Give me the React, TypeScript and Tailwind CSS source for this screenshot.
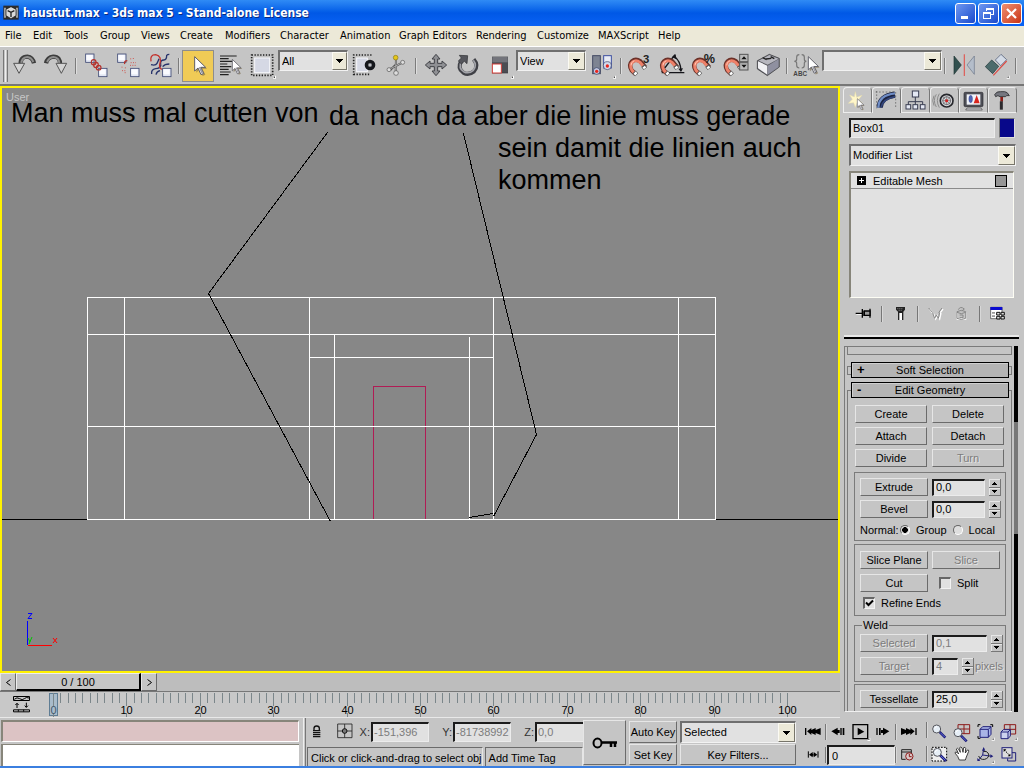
import React from "react";

const UI = "font-['Liberation_Sans',Arial,sans-serif]";
const RAISED = "border border-t-[#e6e6e6] border-l-[#e6e6e6] border-b-[#6b6b6b] border-r-[#6b6b6b]";
const SUNKEN = "border-t-2 border-l-2 border-b border-r border-t-[#1c1c1c] border-l-[#1c1c1c] border-b-[#ececec] border-r-[#ececec] bg-[#e1e1e1]";

type Kids = { children?: React.ReactNode };

/* Icon drawn on a grid three times finer than its size on screen. */
function Icon({ x, y, w = 32, h = 32, children }: { x: number; y: number; w?: number; h?: number } & Kids) {
  return (
    <svg width={w} height={h} viewBox={`${x} ${y} ${w * 3} ${h * 3}`} fill="none" className="block shrink-0" aria-hidden="true">
      {children}
    </svg>
  );
}

function Tool({ label, x, children, active = false }: { label: string; x: number; active?: boolean } & Kids) {
  return (
    <button
      aria-label={label}
      className={
        active
          ? "h-8 w-8 shrink-0 bg-[#f0cb56] outline outline-1 -outline-offset-1 outline-[#8d8d8d]"
          : "h-8 w-8 shrink-0"
      }
    >
      <Icon x={x} y={150}>
        {children}
      </Icon>
    </button>
  );
}

function Sep({ wide = false }: { wide?: boolean }) {
  return (
    <span className={wide ? "flex h-8 w-2 shrink-0 items-center justify-center" : "flex h-8 w-1.5 shrink-0 items-center justify-center"}>
      <span className="h-4 w-0.5 border-l border-[#7b7b7b] bg-[#dedede]" />
    </span>
  );
}

function Combo({ label, value, box, arrow }: { label: string; value: string; box: string; arrow: string }) {
  return (
    <span className={"relative block border-t-2 border-l-2 border-b border-r border-t-[#6f6f6f] border-l-[#6f6f6f] border-b-[#f2f2f2] border-r-[#f2f2f2] bg-[#e1e1e1] " + box}>
      <select aria-label={label} defaultValue={value} className="block h-full w-full appearance-none bg-transparent pr-4 pb-px pl-0.5 text-[11px] leading-3 outline-none">
        <option>{value}</option>
      </select>
      <span className={"pointer-events-none absolute top-0 right-0 bottom-0 flex items-center justify-center border border-t-[#fbfaf3] border-l-[#fbfaf3] border-r-[#77756a] border-b-[#77756a] bg-[#ece9d8] " + arrow}>
        <svg width="7" height="4" viewBox="0 0 7 4" shapeRendering="crispEdges">
          <path d="M0 0H7V1H0ZM1 1H6V2H1ZM2 2H5V3H2ZM3 3H4V4H3Z" fill="#000" />
        </svg>
      </span>
    </span>
  );
}

function Magnet({ dx = 0 }: { dx?: number }) {
  return (
    <g transform={`translate(${dx} 0)`}>
      <path d="M884 223 L872 211 Q862 195 873 184 Q884 174 898 184 L913 202" stroke="#6b3129" strokeWidth="13" />
      <path d="M882 221 L873 211 Q864 195 875 186 Q885 178 897 187 L911 203" stroke="#ee8169" strokeWidth="9" />
      <path d="M870 196 Q870 186 880 182" stroke="#ffc7b4" strokeWidth="3" />
      <path d="M879 216 l8 8 M906 197 l7 9" stroke="#555" strokeWidth="13" />
      <path d="M881 218 l5 5 M908 200 l4 5" stroke="#fff" strokeWidth="9" />
    </g>
  );
}

function Cube({ x, y, s = 25 }: { x: number; y: number; s?: number }) {
  return (
    <g>
      <rect x={x} y={y} width={s} height={s} fill="#e3e7f4" stroke="#3e4873" strokeWidth="2.5" />
      <path d={`M${x + 2} ${y + 3}h${s - 6}v${s - 10}h-${s - 6}z`} fill="#fafbff" />
    </g>
  );
}

function Cursor({ x, y, s = 1 }: { x: number; y: number; s?: number }) {
  return (
    <g transform={`translate(${x} ${y}) scale(${s})`}>
      <path d="M5 5V48L15 38L24 58L32 54L23 36H37Z" fill="#7b6a4a" opacity=".6" />
      <path d="M0 0V43L10 34L19 54L27 50L18 32H33Z" fill="#fff" stroke="#5d5d66" strokeWidth="3" />
      <path d="M12 32l9 19 4-2-8-18z" fill="#9a9aa2" />
    </g>
  );
}

const Flyout = ({ x, y }: { x: number; y: number }) => (
  <>
    <path d={`M${x} ${y}v10h-10z`} fill="#fff" />
    <path d={`M${x - 3} ${y + 3}v4h-4z`} fill="#000" />
  </>
);

const menus = ["File", "Edit", "Tools", "Group", "Views", "Create", "Modifiers", "Character", "Animation", "Graph Editors", "Rendering", "Customize", "MAXScript", "Help"];

function TitleBar() {
  const btn = "flex h-[21px] w-[21px] items-center justify-center rounded-[3px] border border-white";
  return (
    <header className="flex h-[26px] shrink-0 items-center bg-linear-to-b from-[#2f8bf5] via-[#0058e6] to-[#0a62f5] pr-0.5 pl-[3px]">
      <svg width="16" height="16" viewBox="0 0 48 48" aria-hidden="true">
        <rect x="1" y="2" width="46" height="42" fill="#2b2b2b" />
        <path d="M6 8v30M42 8v30" stroke="#d8d8d8" strokeWidth="4" />
        <path d="M24 5l15 8v19l-15 9-15-9V13z" fill="#dadada" stroke="#111" strokeWidth="2" />
        <path d="M14 17l10 5 10-5M24 22v14" stroke="#222" strokeWidth="4" fill="none" />
      </svg>
      <h1 className="flex-1 pl-1 font-['DejaVu_Sans_Condensed','DejaVu_Sans',sans-serif] text-[12px] leading-4 font-bold text-white [text-shadow:1px_1px_0_#0a2a80]">
        haustut.max - 3ds max 5 - Stand-alone License
      </h1>
      <div className="flex gap-0.5">
        <button aria-label="Minimize" className={btn + " bg-linear-to-br from-[#6f97f0] to-[#1a48cc]"}>
          <svg width="15" height="15" viewBox="0 0 15 15"><path d="M3 10h7v3H3z" fill="#fff" /></svg>
        </button>
        <button aria-label="Restore" className={btn + " bg-linear-to-br from-[#6f97f0] to-[#1a48cc]"}>
          <svg width="15" height="15" viewBox="0 0 15 15" fill="none" stroke="#fff" shapeRendering="crispEdges">
            <path d="M5.5 5V2.5h7v6H10M5 3.5h8M2.5 6.500h7v6h-7zM2 7.500h8" />
          </svg>
        </button>
        <button aria-label="Close" className={btn + " bg-linear-to-br from-[#ee8e70] to-[#c9300c]"}>
          <svg width="15" height="15" viewBox="0 0 15 15"><path d="M3 3l9 9M12 3l-9 9" stroke="#fff" strokeWidth="2.200" /></svg>
        </button>
      </div>
    </header>
  );
}

function Toolbar() {
  return (
    <div role="toolbar" aria-label="Main Toolbar" className="flex h-10 shrink-0 items-start overflow-hidden border-t border-b-2 border-t-white border-b-[#777] bg-[#c5c5c5] pt-[3px]">
      <span className="flex h-8 w-2 shrink-0 gap-px pl-[3px]">
        <span className="w-px bg-[#777]" />
        <span className="w-px bg-[#eee]" />
        <span className="w-px bg-[#777]" />
      </span>
      <Tool label="Undo" x={24}>
        <path d="M62 195Q60 170 82 170Q98 172 102 190" stroke="#3d3d3d" strokeWidth="13" />
        <path d="M64 192Q64 172 82 171Q94 172 100 186" stroke="#8f8f8f" strokeWidth="6" />
        <path d="M41 190H74L57 220Z" fill="#d3d3d3" stroke="#555" strokeWidth="3" />
      </Tool>
      <Tool label="Redo" x={120}>
        <path d="M180 195Q182 170 160 170Q142 172 138 190" stroke="#3d3d3d" strokeWidth="13" />
        <path d="M178 192Q178 172 160 171Q148 172 141 186" stroke="#8f8f8f" strokeWidth="6" />
        <path d="M168 190H200L184 220Z" fill="#d3d3d3" stroke="#555" strokeWidth="3" />
      </Tool>
      <Sep wide />
      <Tool label="Select and Link" x={240}>
        <Cube x={257} y={162} />
        <Cube x={296} y={205} />
        <g stroke="#b5312c" strokeWidth="3.500">
          <ellipse cx="281" cy="187" rx="7" ry="8" /><ellipse cx="288" cy="195" rx="7" ry="8" /><ellipse cx="296" cy="203" rx="7" ry="7" />
        </g>
      </Tool>
      <Tool label="Unlink Selection" x={336}>
        <Cube x={353} y={162} />
        <Cube x={392} y={205} />
        <path d="M374 192q-2-10 8-10" stroke="#b5312c" strokeWidth="4" />
        <path d="M392 175v4m8-5v4m-8 10h16m-18 8h20M366 200v4m10-2v4m-10 6h14m-6 6h4" stroke="#cf5b53" strokeWidth="3" strokeDasharray="3 4" />
      </Tool>
      <Tool label="Bind to Space Warp" x={432}>
        <g stroke="#27336b" strokeWidth="4">
          <path d="M453 194q14 4 18-4t6-14M455 222q-2-14 12-16 14 0 16-12M482 194q-2-14 10-14 8 0 8-14 2-3 8-3M468 224q2-10 12-12M488 200q6-8 20-8" />
        </g>
        <path d="M453 184q-4-20 14-20 20 4 12 30-2 12 8 14" stroke="#c3302b" strokeWidth="4" />
        <Cube x={488} y={205} />
      </Tool>
      <Sep />
      <Tool label="Select Object" x={546} active>
        <Cursor x={584} y={170} />
      </Tool>
      <Tool label="Select by Name" x={642}>
        <path d="M660 168h50M660 176h26M660 184h38M660 192h22M660 200h34M660 208h26M660 216h32M660 224h26" stroke="#222" strokeWidth="3.500" />
        <Cursor x={697} y={178} s={0.8} />
      </Tool>
      <Tool label="Rectangular Selection Region" x={738}>
        <rect x="755" y="165" width="63" height="61" stroke="#222" strokeWidth="5" strokeDasharray="4 4.500" />
        <rect x="764" y="174" width="45" height="44" fill="#d5d8e4" stroke="#f7f7fb" strokeWidth="3" />
        <Flyout x={828} y={226} />
      </Tool>
      <Combo label="Selection Filter" value="All" box="h-[21px] w-[70px] shrink-0" arrow="w-[15px]" />
      <Tool label="Window/Crossing" x={24}>
        <path d="M41 226V165H96M41 223H92" stroke="#222" strokeWidth="5" strokeDasharray="4 4.500" />
        <rect x="50" y="174" width="32" height="41" fill="#d5d8e4" stroke="#f7f7fb" strokeWidth="3" />
        <circle cx="90" cy="195" r="16" fill="#15171c" />
        <circle cx="90" cy="195" r="6" fill="#8b8d94" /><circle cx="90" cy="195" r="2.500" fill="#fff" />
      </Tool>
      <Tool label="Select and Manipulate" x={120}>
        <path d="M168 177L167 218M147 209L188 187M167 194l-16 16" stroke="#555" strokeWidth="6" />
        <path d="M168 177L167 218M150 207L188 187" stroke="#bbb" strokeWidth="2.500" />
        <circle cx="167" cy="173" r="7" fill="#e6c718" stroke="#8a7715" strokeWidth="2" />
        <circle cx="147" cy="209" r="6" fill="#ddd" stroke="#555" strokeWidth="2" />
        <circle cx="188" cy="187" r="6" fill="#ddd" stroke="#555" strokeWidth="2" />
        <circle cx="168" cy="219" r="7" fill="#ddd" stroke="#555" strokeWidth="2" />
      </Tool>
      <Sep wide />
      <Tool label="Select and Move" x={240}>
        <path d="M288 163l12 14h-7v13h13v-7l14 12-14 12v-7h-13v13h7l-12 14-12-14h7v-13h-13v7l-14-12 14-12v7h13v-13h-7z" fill="#8f9094" stroke="#414247" strokeWidth="3" />
      </Tool>
      <Tool label="Select and Rotate" x={336}>
        <path d="M364 182Q351 205 370 218Q386 227 402 214Q417 196 401 178" stroke="#3f4046" strokeWidth="12" />
        <path d="M364 184Q354 204 371 215Q386 223 400 211Q412 196 400 181" stroke="#a3a4aa" strokeWidth="5" />
        <path d="M358 166l25 1-2 24-8-7-9 8-9-9 9-9z" fill="#55565c" stroke="#2c2d31" strokeWidth="2" />
      </Tool>
      <Tool label="Select and Scale" x={432}>
        <rect x="457" y="171" width="46" height="48" fill="#4b4c52" stroke="#37383c" strokeWidth="2" />
        <path d="M457 171h46v16h-46z" fill="#73747b" />
        <rect x="457" y="192" width="27" height="27" fill="#fff" stroke="#d6413a" strokeWidth="3" />
        <Flyout x={522} y={226} />
      </Tool>
      <Combo label="Reference Coordinate System" value="View" box="h-[21px] w-[70px] shrink-0" arrow="w-[17px]" />
      <Tool label="Use Pivot Point Center" x={738}>
        <rect x="758" y="167" width="23" height="54" fill="#7e8492" stroke="#434a63" strokeWidth="3" />
        <rect x="791" y="167" width="23" height="37" fill="#e8ebf5" stroke="#3c4ea0" strokeWidth="3" />
        <circle cx="770" cy="213" r="10" fill="#c3cbe3" stroke="#333c60" strokeWidth="2" />
        <circle cx="802" cy="197" r="12" fill="#d3daee" stroke="#333c60" strokeWidth="2" />
        <circle cx="770" cy="214" r="5" fill="#e8261d" /><circle cx="802" cy="198" r="5" fill="#e8261d" />
        <Flyout x={828} y={226} />
      </Tool>
      <Sep />
      <Tool label="Snaps Toggle" x={849}>
        <Magnet />
        <text x="906" y="189" fontSize="34" fontWeight="bold" fontFamily="Liberation Sans" fill="#222">3</text>
      </Tool>
      <Tool label="Angle Snap" x={945}>
        <path d="M962 218h68M962 216l40-52M1000 170q18 12 20 42" stroke="#15151a" strokeWidth="4" />
        <path d="M1012 206l8 10 6-11zM992 172l12-9 2 14z" fill="#15151a" />
        <Magnet dx={96} />
      </Tool>
      <Tool label="Percent Snap" x={16}>
        <Magnet dx={-833} />
        <text x="63" y="190" fontSize="38" fontWeight="bold" fontFamily="Liberation Sans" fill="#222">%</text>
      </Tool>
      <Tool label="Spinner Snap" x={112}>
        <Magnet dx={-738} />
        <rect x="171" y="163" width="25" height="22" fill="#bbb" stroke="#555" strokeWidth="3" />
        <rect x="171" y="188" width="25" height="22" fill="#bbb" stroke="#555" strokeWidth="3" />
        <path d="M176 178l8-9 8 9zM176 194l8 9 8-9z" fill="#111" />
      </Tool>
      <Tool label="Keyboard Shortcut Override" x={210}>
        <path d="M226 182l36-19 30 12v26l-36 26-30-20z" fill="#55565c" stroke="#3b3b40" strokeWidth="2" />
        <path d="M228 184l28 13v27l-28-19z" fill="#f1f1f4" />
        <path d="M257 197l33-20v24l-33 23z" fill="#8f90a0" />
        <path d="M230 182l32-17 28 11-33 18z" fill="#b7b7bf" />
        <path d="M242 173l12 6M252 177l16-2M266 170l11 6" stroke="#222" strokeWidth="4" />
      </Tool>
      <Sep />
      <Tool label="Named Selection Sets" x={326}>
        <path d="M354 164q-8 0-8 8v6q0 6-7 6 7 0 7 6v6q0 8 8 8M361 164q8 0 8 8v6q0 6 6 6-6 0-6 6v6q0 8-8 8" stroke="#777" strokeWidth="3.500" />
        <text x="336" y="227" fontSize="19" fontWeight="bold" fontFamily="Liberation Sans" fill="#444">ABC</text>
        <Cursor x={381} y={170} s={0.92} />
      </Tool>
      <Combo label="Named Selection" value="" box="h-[21px] w-[120px] shrink-0" arrow="w-[17px]" />
      <Sep />
      <Tool label="Mirror" x={798}>
        <path d="M816 168l22 27-22 28z" fill="#31504f" stroke="#203534" strokeWidth="2" />
        <path d="M877 168l-22 27 22 28z" fill="#b4bdca" stroke="#6a7486" strokeWidth="2" />
        <path d="M847 163v65" stroke="#e05a55" strokeWidth="3.500" />
      </Tool>
      <Tool label="Align" x={894}>
        <path d="M910 200l19-20 21 19-18 22z" fill="#4c6b6c" stroke="#2f4546" strokeWidth="2.500" />
        <path d="M940 180l17-17 17 16-18 18z" fill="#d4dbe6" stroke="#5d6780" strokeWidth="2.500" />
        <path d="M934 226l40-43" stroke="#dd4a44" strokeWidth="3.500" />
        <Flyout x={983} y={226} />
      </Tool>
      <Sep wide />
    </div>
  );
}

function Viewport() {
  const note = "absolute text-[27px] leading-8 whitespace-nowrap text-black";
  return (
    <section aria-label="User viewport" className="relative min-h-0 flex-1 overflow-hidden border-2 border-[#fff200] bg-[#878787]">
      <svg className="absolute inset-0 h-full w-full" shapeRendering="crispEdges" fill="none">
        <g transform="translate(-2 -88)">
          <path d="M0 519.500H87M716 519.500H3000" stroke="#000" />
          <path d="M373.500 519V386.500H425.500V519" stroke="#b01c55" />
          <path d="M87.500 297.500H715.500V519.500H87.500ZM87 334.500H716M87 426.500H716M124.500 297V519M678.500 297V519M309.500 297V519M493.500 297V519M309 357.500H494M334.500 334V519M469.500 337V519" stroke="#fff" />
          <path d="M327.500 132.500L208.500 293.500L330.500 521.500M463.500 133.500L536.500 434.500L493.500 516.500M493.500 513.500L469.500 517.500" stroke="#000" />
          <path d="M27.500 621V645" stroke="#00f" />
          <path d="M28 645.500H52" stroke="#f00" />
          <g shapeRendering="auto">
            <path d="M28 613.500h4l-4 5h4" stroke="#00f" />
            <path d="M53 638l4 5M57 638l-4 5" stroke="#f00" />
            <path d="M28 638l2 4M32 637l-3 7" stroke="#00c800" />
          </g>
        </g>
      </svg>
      <span className="absolute top-[3px] left-1 text-[11px] leading-3 text-[#c6c6c6]">User</span>
      <p className={note + " top-[9px] left-[9px]"}>Man muss mal cutten von</p>
      <p className={note + " top-3 left-[327px]"}>da</p>
      <p className={note + " top-3 left-[368px]"}>nach da aber die linie muss gerade</p>
      <p className={note + " top-11 left-[496px]"}>
        sein damit die linien auch
        <br />
        kommen
      </p>
    </section>
  );
}

const frames = Array.from({ length: 101 }, (_, i) => i);

function TimeBar() {
  const at = (f: number) => Math.round(4 + f * 7.34) + 0.5;
  return (
    <>
      <div className="flex h-[18px] shrink-0 bg-[#bdbdbd]">
        <button aria-label="Previous frame" className={"flex w-4 items-center justify-center bg-[#c5c5c5] " + RAISED}>
          <svg width="5" height="7" viewBox="0 0 5 7" fill="none" stroke="#000"><path d="M4.500 .5l-4 3 4 3" /></svg>
        </button>
        <button className="w-[125px] border border-t-[#eee] border-r-2 border-b-2 border-l-[#eee] border-r-black border-b-black bg-[#c5c5c5] text-[11px] leading-3">
          0 / 100
        </button>
        <button aria-label="Next frame" className={"flex w-4 items-center justify-center bg-[#c5c5c5] " + RAISED}>
          <svg width="5" height="7" viewBox="0 0 5 7" fill="none" stroke="#000"><path d="M.5 .5l4 3-4 3" /></svg>
        </button>
      </div>
      <div className="flex h-[27px] shrink-0 border-t border-b border-t-[#777] border-b-[#e8e8e8] bg-[#c8c8c8]">
        <button aria-label="Open Mini Curve Editor" className="w-[49px] shrink-0 pl-[13px]">
          <svg width="17" height="17" viewBox="0 0 51 51" fill="none" stroke="#000" strokeWidth="3">
            <path d="M1.500 1.500h48v12h-48zM4 10q8-8 16-2t14 0 14-2M1.500 41.500h48v6h-48zM12 36V22M7 27l5-5 5 5M40 20v14M35 29l5 5 5-5M16 41v6M32 41v6" />
          </svg>
        </button>
        <svg className="h-full min-w-0 flex-1" fill="none" aria-label="Track bar">
          <g shapeRendering="crispEdges" stroke="#7b868a">
            <rect x="0.500" y="1.500" width="8" height="22" fill="#a9bccb" stroke="#5f7d94" />
            {frames.map((f) => (
              <path key={f} d={f % 10 ? `M${at(f)} 1V11` : `M${at(f)} 1V14M${at(f)} 21V25`} />
            ))}
          </g>
          {frames.filter((f) => f % 10 === 0).map((f) => (
            <text key={f} x={at(f)} y="22" textAnchor="middle" fontSize="11" fill={f ? "#000" : "#41586c"}>
              {f}
            </text>
          ))}
        </svg>
      </div>
    </>
  );
}

function Push({ children, disabled = false, size = "h-[18px]" }: { disabled?: boolean; size?: string } & Kids) {
  return (
    <button
      disabled={disabled}
      className={
        RAISED + " " + size + " shrink-0 text-center text-[11px] leading-3 whitespace-nowrap " +
        (disabled ? "text-[#7c7c7c] [text-shadow:1px_1px_0_#e4e4e4]" : "text-black")
      }
    >
      {children}
    </button>
  );
}

function Spinner({ label, value, box, disabled = false }: { label: string; value: string; box: string; disabled?: boolean }) {
  return (
    <span className="flex gap-1">
      <input
        aria-label={label}
        defaultValue={value}
        disabled={disabled}
        className={SUNKEN + " h-[17px] pb-0.5 pl-0.5 text-[11px] leading-3 outline-none " + box + (disabled ? " text-[#7c7c7c]" : " text-black")}
      />
      <button aria-label={label + " stepper"} disabled={disabled} className="h-[17px] w-3">
        <svg width="12" height="17" viewBox="0 0 12 17" shapeRendering="crispEdges">
          <path d="M0 .5H12M.5 0V17M0 9.500H12" stroke="#e6e6e6" />
          <path d="M0 8.500H12M11.500 0V17M0 16.500H12" stroke="#777" />
          <path d="M5 3h1v1h1v1h1v1H3V5h1V4h1zM3 11h5v1H7v1H6v1H5v-1H4v-1H3z" fill="#000" />
        </svg>
      </button>
    </span>
  );
}

function Radio({ label, on = false }: { label: string; on?: boolean }) {
  return (
    <label className="flex items-center gap-1.5">
      <input
        type="radio"
        name="normal"
        defaultChecked={on}
        className="h-2.5 w-2.5 appearance-none rounded-full border border-t-[#666] border-r-white border-b-white border-l-[#666] bg-[#dedede] checked:bg-[radial-gradient(circle,#000_45%,#dedede_55%)]"
      />
      {label}
    </label>
  );
}

function Check({ label, on = false }: { label: string; on?: boolean }) {
  return (
    <label className="flex items-center gap-1.5">
      <span className="relative h-3 w-3">
        <input type="checkbox" defaultChecked={on} className="block h-3 w-3 appearance-none border-t-2 border-l-2 border-r border-b border-t-[#666] border-r-[#f2f2f2] border-b-[#f2f2f2] border-l-[#666] bg-[#e1e1e1]" />
        {on && (
          <svg className="pointer-events-none absolute inset-0" width="12" height="12" viewBox="0 0 12 12" fill="none" stroke="#000" strokeWidth="2">
            <path d="M3 5.500l2.500 2.500L10 3.500" />
          </svg>
        )}
      </span>
      {label}
    </label>
  );
}

function Tab({ label, x, active = false, children }: { label: string; x: number; active?: boolean } & Kids) {
  return (
    <button
      role="tab"
      aria-label={label}
      aria-selected={active}
      className={
        "flex h-[26px] w-[29px] shrink-0 justify-center rounded-t-sm border-t border-r border-l border-t-[#ededed] border-r-[#777] border-l-[#ededed] " +
        (active ? "" : "border-b border-b-[#ededed]")
      }
    >
      <Icon x={x} y={9} w={27} h={25}>{children}</Icon>
    </button>
  );
}

function SmallSep() {
  return <span className="h-4 w-0.5 border-l border-[#777] bg-[#d8d8d8]" />;
}

function CommandPanel() {
  const edge = "border-[#7b7b7b]";
  return (
    <aside className="flex w-[184px] shrink-0 flex-col overflow-hidden pt-px pl-[3px]">
      <div role="tablist" className="flex shrink-0">
        <Tab label="Create" x={12}>
          <path d="M46 20l4 17 16-6-11 13 12 10-16-1-5 14-5-14-16 2 12-12-8-13 14 6z" fill="#fff6c9" stroke="#e6dca8" strokeWidth="1.500" />
          <Cursor x={52} y={41} s={0.6} />
        </Tab>
        <Tab label="Modify" x={96} active>
          <path d="M116 68Q118 34 162 29" stroke="#1c2340" strokeWidth="19" />
          <path d="M112 68Q113 30 162 25" stroke="#6f8dc6" strokeWidth="7" />
          <path d="M120 68Q124 42 162 35" stroke="#33467c" strokeWidth="5" />
          <path d="M107 18v52M104 21h60v50" stroke="#555" strokeWidth="2" strokeDasharray="5 5" />
        </Tab>
        <Tab label="Hierarchy" x={184}>
          <path d="M224 36v14M203 62V50h43v12M224 50v12" stroke="#3a3e52" strokeWidth="3" />
          <g fill="#e4e8f3" stroke="#3a3e52" strokeWidth="3">
            <rect x="215" y="18" width="19" height="18" /><rect x="196" y="59" width="14" height="13" /><rect x="217" y="59" width="14" height="13" /><rect x="239" y="59" width="14" height="13" />
          </g>
        </Tab>
        <Tab label="Motion" x={274}>
          <path d="M290 28q-12 18 0 38M299 26q-12 20 0 42M283 32q-8 14 0 30" stroke="#8d8d8d" strokeWidth="3" />
          <circle cx="321" cy="47" r="19" fill="#d9d9dc" stroke="#26272c" strokeWidth="5" />
          <circle cx="321" cy="47" r="12" stroke="#3b3c42" strokeWidth="2" />
          <path d="M321 35v24M309 47h24M312 38l18 18M330 38l-18 18" stroke="#444" strokeWidth="1.500" />
          <circle cx="321" cy="47" r="4.500" fill="#d22020" />
        </Tab>
        <Tab label="Display" x={359}>
          <rect x="371" y="22" width="57" height="43" rx="4" fill="#4d4e56" stroke="#2c2c30" strokeWidth="2" />
          <rect x="379" y="28" width="41" height="31" fill="#f0f3fa" />
          <ellipse cx="391" cy="42" rx="5.500" ry="11" fill="#5064b4" stroke="#26367f" />
          <path d="M409 30l9 25h-18z" fill="#d8241e" />
          <path d="M380 69h42l4 6h-50z" fill="#d2d2d8" stroke="#444" strokeWidth="2" />
        </Tab>
        <Tab label="Utilities" x={446}>
          <path d="M463 29q6-11 18-9h12q8 0 14 12-9-2-12 3h-16q-6-6-13 0z" fill="#75777f" stroke="#2a2b2e" strokeWidth="2.500" />
          <path d="M484 36v14" stroke="#8c1f18" strokeWidth="8" />
          <path d="M483 49v25" stroke="#2c2a2d" strokeWidth="9" />
        </Tab>
      </div>

      <div className="mt-[5px] flex h-5 shrink-0 gap-1 pl-1.5">
        <input aria-label="Object name" defaultValue="Box01" className={SUNKEN + " w-[146px] pb-px pl-0.5 text-[11px] leading-3 outline-none"} />
        <button aria-label="Object color" className="h-5 w-4 border border-t-[#777] border-l-[#777] border-[#ddd] bg-[#08088a]" />
      </div>
      <Combo label="Modifier List" value="Modifier List" box="ml-1.5 mt-1.5 h-[22px] w-[167px] shrink-0" arrow="w-[17px]" />
      <div className="mt-[5px] ml-1.5 h-[127px] w-[165px] shrink-0 border-t-2 border-l-2 border-r border-b border-t-[#87857a] border-r-[#fdfdf4] border-b-[#fdfdf4] border-l-[#87857a] bg-[#e1e1e1]">
        <div className="flex h-4 items-center border-b border-[#8a8a8a] pr-1.5 pl-1.5 text-[11px] leading-3">
          <svg width="9" height="9" viewBox="0 0 9 9" shapeRendering="crispEdges"><path d="M0 0h9v9H0z" /><path d="M2 4h5v1H2zM4 2h1v5H4z" fill="#fff" /></svg>
          <span className="flex-1 pl-[7px]">Editable Mesh</span>
          <span className="h-3 w-3 border border-black bg-[#959595]" />
        </div>
      </div>

      <div className="flex h-8 w-full shrink-0 items-center gap-2 pl-3">
        <button aria-label="Pin Stack">
          <Icon x={46} y={46} w={18} h={18}>
            <path d="M50 74h19" stroke="#fff" strokeWidth="3" />
            <path d="M48 71h20M68 58v26M73 63v16M91 57v27" stroke="#000" strokeWidth="4" />
            <path d="M74 64h17v13H74z" fill="#999" stroke="#000" strokeWidth="4" />
          </Icon>
        </button>
        <SmallSep />
        <button aria-label="Show end result">
          <Icon x={152} y={46} w={18} h={18}>
            <path d="M167 52h27v8l-5 6v25h-16V66l-6-6z" fill="#222" /><path d="M177 70h8v21h-8z" fill="#fff" /><path d="M171 57h18M175 62h12" stroke="#888" strokeWidth="3" strokeDasharray="3 3" />
          </Icon>
        </button>
        <SmallSep />
        <button aria-label="Make unique" disabled>
          <Icon x={262} y={46} w={18} h={18}>
            <path d="M270 58l10 14M310 58l-10 14M282 72l6 16 6-10 6 10 4-18" stroke="#fff" strokeWidth="4" />
            <path d="M267 55l12 14M307 55l-10 14M279 70l6 16 5-10 6 10 4-18" stroke="#888" strokeWidth="3" />
          </Icon>
        </button>
        <button aria-label="Remove modifier" disabled>
          <Icon x={334} y={46} w={18} h={18}>
            <path d="M347 68v20h25V68" stroke="#fff" strokeWidth="4" />
            <path d="M346 66q13-8 26 0v20q-13 7-26 0zM346 68q13 8 26 0M350 60q6-12 18-2l-8 6M354 76h10v8h-10" stroke="#888" strokeWidth="3" />
          </Icon>
        </button>
        <SmallSep />
        <button aria-label="Configure modifier sets">
          <Icon x={444} y={46} w={18} h={18}>
            <path d="M449 53h34v34h-34z" fill="#fff" stroke="#333" strokeWidth="2" /><path d="M448 52h36v9h-36z" fill="#0a0ad0" />
            <path d="M453 67h9v5h-9zM453 77h9v5h-9z" fill="#999" /><path d="M467 68h10v8h-10zM480 68h10v8h-10zM467 80h10v8h-10zM480 80h10v8h-10z" fill="#ddd" stroke="#111" strokeWidth="3" />
          </Icon>
        </button>
      </div>

      <div className="mt-[5px] mr-[5px] ml-px h-1 shrink-0 border-t-2 border-b-2 border-t-[#e8e8e8] border-b-black" />

      <div className="mt-[7px] mb-1.5 ml-px flex min-h-0 flex-1 gap-0.5 overflow-hidden">
        <div className="w-[168px] overflow-hidden border-t border-b border-l border-t-[#7b7b7b] border-b-[#f0f0f0] border-l-[#7b7b7b] pl-0.5 text-[11px] leading-3">
          <div className={"h-2 w-[165px] border-r border-b border-l " + edge} />
          <div className="mt-[7px] flex w-[165px] items-center">
            <span className={"h-[9px] w-1 border-y border-l " + edge} />
            <button className="flex h-4 flex-1 items-center border border-black bg-[#b4b4b4] px-[5px] shadow-[inset_1px_1px_0_#cfcfcf]">
              <span className="w-2 text-left text-[13px] font-bold">+</span>
              <span className="flex-1 pr-2">Soft Selection</span>
            </button>
            <span className={"h-[9px] w-[3px] border-y border-r " + edge} />
          </div>
          <div className="mt-1 flex w-[165px] items-end">
            <span className={"h-2 w-1 border-t border-l " + edge} />
            <button className="flex h-4 flex-1 items-center border border-black bg-[#b4b4b4] px-[5px] shadow-[inset_1px_1px_0_#cfcfcf]">
              <span className="w-2 text-left text-[13px] font-bold">-</span>
              <span className="flex-1 pr-2">Edit Geometry</span>
            </button>
            <span className={"h-2 w-[3px] border-t border-r " + edge} />
          </div>
          <div className={"h-full w-[165px] border-r border-l pt-[7px] pr-[5px] pl-1.5 " + edge}>
            <div className="grid grid-cols-[72px_72px] gap-x-[5px] gap-y-1 pl-px">
              <Push>Create</Push>
              <Push>Delete</Push>
              <Push>Attach</Push>
              <Push>Detach</Push>
              <Push>Divide</Push>
              <Push disabled>Turn</Push>
            </div>
            <div className={"mt-[5px] border pt-[5px] pb-px pl-[5px] " + edge}>
              <div className="grid grid-cols-[68px_auto] items-center justify-start gap-x-1 gap-y-1">
                <Push>Extrude</Push>
                <Spinner label="Extrude" value="0,0" box="w-[53px]" />
                <Push>Bevel</Push>
                <Spinner label="Bevel" value="0,0" box="w-[53px]" />
              </div>
              <div className="mt-[3px] flex h-[18px] items-center">
                <span className="w-10">Normal:</span>
                <span className="flex gap-1.5">
                  <Radio label="Group" on />
                  <Radio label="Local" />
                </span>
              </div>
            </div>
            <div className={"mt-[3px] border pt-1.5 pb-[3px] pl-[5px] " + edge}>
              <div className="grid grid-cols-[68px_68px] items-center gap-x-1 gap-y-[5px]">
                <Push>Slice Plane</Push>
                <Push disabled>Slice</Push>
                <Push>Cut</Push>
                <span className="pl-[7px]">
                  <Check label="Split" />
                </span>
              </div>
              <div className="mt-0.5 flex h-[18px] items-center pl-[3px]">
                <Check label="Refine Ends" on />
              </div>
            </div>
            <fieldset className={"mt-[3px] border pt-[3px] pb-1.5 pl-[5px] " + edge}>
              <legend className="ml-0.5 px-px leading-3">Weld</legend>
              <div className="grid grid-cols-[68px_auto] items-center justify-start gap-x-1 gap-y-[5px]">
                <Push disabled>Selected</Push>
                <Spinner label="Weld selected threshold" value="0,1" box="w-[55px]" disabled />
                <Push disabled>Target</Push>
                <span className="flex items-center">
                  <Spinner label="Weld target pixels" value="4" box="w-[26px]" disabled />
                  <span className="pl-px text-[#7c7c7c] [text-shadow:1px_1px_0_#e4e4e4]">pixels</span>
                </span>
              </div>
            </fieldset>
            <div className={"mt-0.5 border pt-[5px] pb-[5px] pl-[5px] " + edge}>
              <div className="grid grid-cols-[68px_auto] items-center justify-start gap-x-1">
                <Push>Tessellate</Push>
                <Spinner label="Tessellate" value="25,0" box="w-[55px]" />
              </div>
            </div>
          </div>
        </div>
        <div className="flex w-1 flex-col bg-black">
          <span className="h-[76px]" />
          <span className="h-28 bg-[#777]" />
        </div>
      </div>
    </aside>
  );
}

function Coord({ axis, value }: { axis: string; value: string }) {
  return (
    <label className="flex w-[76px] shrink-0 items-center justify-end gap-px">
      <span className="text-[11px] text-[#333]">{axis}:</span>
      <input defaultValue={value} disabled className={SUNKEN + " h-5 w-[58px] pl-px text-[11px] leading-3 text-[#7c7c7c]"} />
    </label>
  );
}

function Lens({ x, y }: { x: number; y: number }) {
  return (
    <g>
      <path d={`M${x + 8} ${y + 8}l18 18`} stroke="#20207a" strokeWidth="8" />
      <path d={`M${x + 11} ${y + 11}l13 13`} stroke="#5a64d8" strokeWidth="3" />
      <circle cx={x} cy={y} r="12" fill="#e6eef6" stroke="#55565c" strokeWidth="3" />
      <path d={`M${x - 6} ${y - 1}q1-6 7-6`} stroke="#fff" strokeWidth="3" />
    </g>
  );
}

function Nav({ label, x, y, children }: { label: string; x: number; y: number } & Kids) {
  return (
    <button aria-label={label} className="h-[23px] w-[23px]">
      <Icon x={x} y={y} w={23} h={23}>{children}</Icon>
    </button>
  );
}

function StatusBar() {
  return (
    <footer className="flex h-12 shrink-0 overflow-hidden bg-[#c5c5c5] text-[11px] leading-3">
      <div className="flex min-w-0 flex-1 flex-col gap-0.5 pt-0.5 pl-px">
        <input aria-label="Macro recorder" className="h-[22px] w-full border-t-2 border-l-2 border-r border-b border-t-[#87857a] border-r-white border-b-white border-l-[#87857a] bg-[#dcc3c4]" />
        <input aria-label="MAXScript listener" className="h-[22px] w-full border-t border-l-2 border-t-[#87857a] border-l-[#87857a] bg-white" />
      </div>
      <span className="ml-1 w-[3px] shrink-0 border-r border-l border-r-[#777] border-l-[#eee]" />

      <div className="flex w-[277px] shrink-0 flex-col overflow-hidden pl-px">
        <div className="flex h-[27px] items-center">
          <button aria-label="Selection Lock" className="pl-1.5">
            <Icon x={44} y={162} w={14} h={18}>
              <path d="M47 184v-6q0-7 8-7t8 7v6" stroke="#111" strokeWidth="4" />
              <path d="M42 185h24M42 191h24M42 197h24M42 203h24" stroke="#111" strokeWidth="4" />
            </Icon>
          </button>
          <button aria-label="Absolute Mode" className="pl-2.5">
            <Icon x={114} y={162} w={16} h={17}>
              <path d="M116 165h43v41h-43zM137 165v41M116 186h43" stroke="#222" strokeWidth="2.500" /><circle cx="137" cy="186" r="7" fill="#777" stroke="#111" strokeWidth="3" />
            </Icon>
          </button>
          <div className="flex gap-1.5">
            <Coord axis="X" value="-151,396" />
            <Coord axis="Y" value="-81738992" />
            <Coord axis="Z" value="0,0" />
          </div>
        </div>
        <div className="mt-0.5 flex flex-1 gap-0.5">
          <p className="shrink-0 border-t border-r border-l border-t-[#6b6b6b] border-r-[#e6e6e6] border-l-[#6b6b6b] pt-1 pl-[3px] whitespace-nowrap">
            Click or click-and-drag to select obj
          </p>
          <p className="flex-1 border-t border-r border-l border-t-[#6b6b6b] border-r-[#e6e6e6] border-l-[#6b6b6b] pt-1 pl-[3px] whitespace-nowrap">Add Time Tag</p>
        </div>
      </div>

      <div className="flex shrink-0 gap-[3px] pt-0.5 pb-px">
        <button aria-label="Set Keys" className={"flex w-[43px] items-center justify-center " + RAISED}>
          <svg width="26" height="12" viewBox="0 0 26 12" fill="none" stroke="#000" strokeWidth="2">
            <ellipse cx="5.500" cy="6" rx="4" ry="4.500" /><path d="M9 5.500h16M19 6v4M23 6v4" strokeWidth="2.500" />
          </svg>
        </button>
        <div className="flex w-12 flex-col gap-px pt-px">
          <Push size="h-[22px]">Auto Key</Push>
          <Push size="h-[21px]">Set Key</Push>
        </div>
        <div className="flex w-[116px] flex-col gap-px pt-px">
          <Combo label="Key selection set" value="Selected" box="h-[22px] w-full" arrow="w-[17px]" />
          <Push size="h-[21px]">Key Filters...</Push>
        </div>
      </div>

      <div className="flex w-[130px] shrink-0 flex-col pl-1.5">
        <div className="flex h-[27px] items-center">
          <button aria-label="Go to Start">
            <Icon x={423} y={150} w={23} h={23}>
              <path d="M434 174v21" stroke="#000" strokeWidth="4" /><path d="M438 184l13-10v6l13-6v6l15-6v21l-15-6v6l-13-6v6z" fill="#000" />
            </Icon>
          </button>
          <SmallSep />
          <button aria-label="Previous Frame">
            <Icon x={503} y={150} w={22} h={23}><path d="M516 184l19-11v7h6v9h-6v7zM543 174h4v21h-4zM550 174h5v21h-5z" fill="#000" /></Icon>
          </button>
          <button aria-label="Play Animation">
            <Icon x={569} y={150} w={22} h={23}>
              <path d="M581 164h44v42h-44z" stroke="#000" strokeWidth="4" /><path d="M595 173l20 12-20 11z" fill="#000" /><Flyout x={633} y={203} />
            </Icon>
          </button>
          <button aria-label="Next Frame">
            <Icon x={635} y={150} w={24} h={23}><path d="M690 184l-19-11v7h-6v9h6v7zM651 174h4v21h-4zM659 174h5v21h-5z" fill="#000" /></Icon>
          </button>
          <SmallSep />
          <button aria-label="Go to End">
            <Icon x={715} y={150} w={24} h={23}>
              <path d="M772 174v21" stroke="#000" strokeWidth="4" /><path d="M768 184l-13-10v6l-13-6v6l-15-6v21l15-6v6l13-6v6z" fill="#000" />
            </Icon>
          </button>
        </div>
        <div className="flex h-5 items-center">
          <button aria-label="Key Mode Toggle">
            <Icon x={424} y={220} w={23} h={20}>
              <path d="M443 239v19M472 239v19" stroke="#000" strokeWidth="3" /><path d="M445 249l11-8v16zM470 249l-11-8v16zM456 246h4v6h-4z" fill="#000" />
            </Icon>
          </button>
          <SmallSep />
          <input aria-label="Current frame" defaultValue="0" className={SUNKEN + " h-5 w-[68px] pl-[3px] text-[11px] leading-3"} />
          <SmallSep />
          <button aria-label="Time Configuration">
            <Icon x={718} y={220} w={24} h={20}>
              <path d="M732 234h29v7h-29zM732 241v22h12M761 241v4" stroke="#222" strokeWidth="3" />
              <circle cx="755" cy="254" r="11" fill="#d8c8c8" stroke="#8c1a1a" strokeWidth="3" /><path d="M755 246v9h7" stroke="#8c1a1a" strokeWidth="3" />
            </Icon>
          </button>
        </div>
      </div>

      <div className="flex w-[98px] shrink-0 items-start">
        <span className="flex h-12 flex-col justify-around"><SmallSep /><SmallSep /></span>
        <div className="grid grid-cols-4 pt-0.5">
          <Nav label="Zoom" x={803} y={150}><Lens x={829} y={177} /></Nav>
          <Nav label="Zoom All" x={872} y={150}>
            <path d="M893 164h35v27h-35zM911 164v27M893 177h35" stroke="#8c1a1a" strokeWidth="3" />
            <Lens x={893} y={188} />
          </Nav>
          <Nav label="Zoom Extents" x={941} y={150}>
            <path d="M959 178l8-8h25v23l-8 9h-25z" fill="#a9b4e6" stroke="#20207a" strokeWidth="3" /><path d="M959 178h25v24M984 178l8-8" stroke="#20207a" strokeWidth="3" />
            <path d="M953 171v-7h7M990 164h7v7M953 198v7h7" stroke="#000" strokeWidth="3" /><Flyout x={1003} y={202} />
          </Nav>
          <Nav label="Zoom Extents All" x={1010} y={150}>
            <path d="M1032 164h34v28h-34zM1049 164v28M1032 178h34" stroke="#8c1a1a" strokeWidth="3" />
            <path d="M1022 186l7-7h21v19l-7 8h-21z" fill="#ccd2ee" stroke="#20207a" strokeWidth="3" /><path d="M1022 186h21v20M1043 186l7-7" stroke="#20207a" strokeWidth="3" /><Flyout x={1072} y={202} />
          </Nav>
          <Nav label="Region Zoom" x={803} y={217}>
            <rect x="815" y="230" width="44" height="41" fill="#eee" stroke="#000" strokeWidth="3" strokeDasharray="5 4" /><Lens x={831} y={245} />
          </Nav>
          <Nav label="Pan" x={872} y={217}>
            <path d="M897 268l-5-11-8-10q0-5 6-2l5 5-7-15q3-5 7 1l5 9-2-14q4-5 7 1l3 13 2-14q5-3 6 2l-1 14 6-9q5-1 4 4l-7 17-3 9z" fill="#fff" stroke="#222" strokeWidth="2.500" />
          </Nav>
          <Nav label="Arc Rotate" x={941} y={217}>
            <path d="M970 233l-3 20-12 15M967 253l28 4" stroke="#20207a" strokeWidth="3" /><path d="M955 256q4 12 18 10 14-4 12-16-4-10-16-8" stroke="#222" strokeWidth="3" />
            <path d="M965 240l5-11 5 11zM990 251l9 6-9 5zM951 262v9h9z" fill="#20207a" /><Flyout x={1003} y={269} />
          </Nav>
          <Nav label="Min/Max Toggle" x={1010} y={217}>
            <path d="M1046 246h20v25h-24v-8" stroke="#20207a" strokeWidth="3" /><rect x="1025" y="231" width="30" height="31" fill="#ddd" stroke="#20207a" strokeWidth="3" />
            <path d="M1031 237l18 18" stroke="#000" strokeWidth="3" strokeDasharray="5 3" /><path d="M1030 236h8l-8 8zM1050 257h-8l8-8z" fill="#000" />
          </Nav>
        </div>
      </div>
    </footer>
  );
}

export default function App() {
  return (
    <div className={"flex h-screen flex-col overflow-hidden bg-[#c5c5c5] text-black " + UI}>
      <TitleBar />
      <nav aria-label="Menu bar" className="grid h-5 shrink-0 grid-cols-[28px_31px_36px_41px_39px_45px_55px_60px_59px_77px_61px_61px_60px_1fr] items-center bg-[#ece9d8] pl-[5px] font-['DejaVu_Sans_Condensed','DejaVu_Sans',sans-serif] text-[11px] leading-4">
        {menus.map((m) => (
          <button key={m} className="text-left whitespace-nowrap">
            {m}
          </button>
        ))}
      </nav>
      <Toolbar />
      <main className="flex min-h-0 flex-1">
        <div className="flex min-w-0 flex-1 flex-col">
          <Viewport />
          <TimeBar />
        </div>
        <CommandPanel />
      </main>
      <StatusBar />
      <div className="h-0.5 shrink-0 bg-[#3b7fe0]" />
    </div>
  );
}
